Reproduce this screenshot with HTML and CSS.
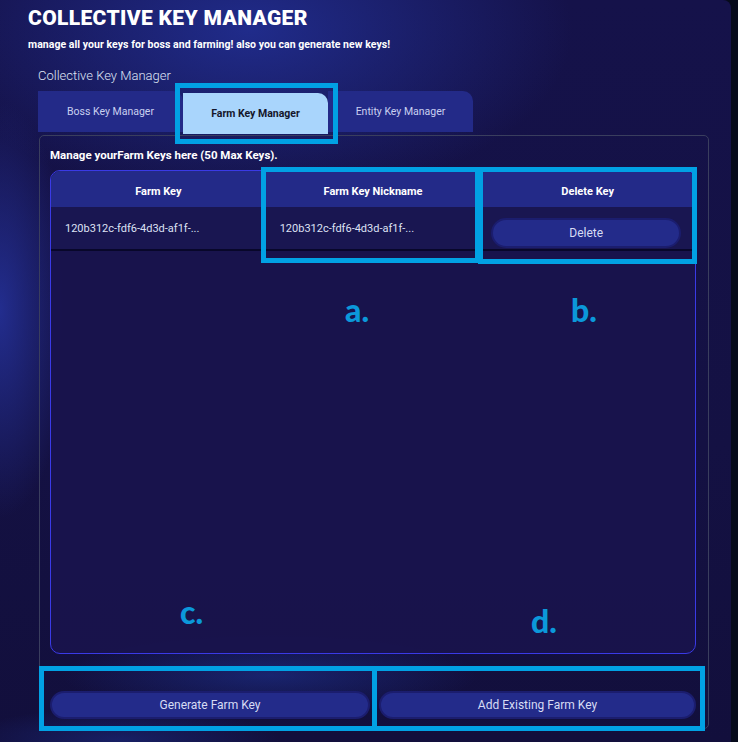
FILE: index.html
```html
<!DOCTYPE html>
<html>
<head>
<meta charset="utf-8">
<link rel="stylesheet" href="styles.css">
</head>
<body>
<div class="page">
  <h1 class="title">COLLECTIVE KEY MANAGER</h1>
  <p class="subtitle">manage all your keys for boss and farming! also you can generate new keys!</p>
  <div class="section-label">Collective Key Manager</div>
  <div class="tabs">
    <div class="tab">Boss Key Manager</div>
    <div class="tab active">Farm Key Manager</div>
    <div class="tab">Entity Key Manager</div>
  </div>
  <div class="panel">
    <div class="panel-head">Manage yourFarm Keys here (50 Max Keys).</div>
    <div class="table">
      <div class="row head">
        <div class="cell">Farm Key</div>
        <div class="cell">Farm Key Nickname</div>
        <div class="cell">Delete Key</div>
      </div>
      <div class="row data">
        <div class="cell">120b312c-fdf6-4d3d-af1f-...</div>
        <div class="cell">120b312c-fdf6-4d3d-af1f-...</div>
        <div class="cell btn-cell"><button class="pill small">Delete</button></div>
      </div>
    </div>
    <div class="actions">
      <button class="pill">Generate Farm Key</button>
      <button class="pill">Add Existing Farm Key</button>
    </div>
  </div>

  <div class="mark box-tab"></div>
  <div class="mark box-nick"></div>
  <div class="mark box-del"></div>
  <div class="mark box-gen"></div>
  <div class="mark box-add"></div>

  <span class="letter l-a">a.</span>
  <span class="letter l-b">b.</span>
  <span class="letter l-c">c.</span>
  <span class="letter l-d">d.</span>
</div>
</body>
</html>
```

FILE: styles.css
```css
html, body {
  margin: 0;
  padding: 0;
  background: #060a1b;
}
body {
  width: 738px;
  height: 742px;
  overflow: hidden;
  font-family: Roboto, "Noto Sans", sans-serif;
}
.page {
  position: relative;
  width: 731px;
  height: 742px;
  border-top-right-radius: 8px;
  overflow: hidden;
  display: flex;
  flex-direction: column;
  background:
    radial-gradient(ellipse 430px 230px at 250px 30px, rgba(34, 48, 150, 0.85) 0%, rgba(34, 48, 150, 0) 75%),
    radial-gradient(ellipse 90px 260px at 0px 310px, rgba(36, 48, 150, 0.9) 0%, rgba(36, 48, 150, 0) 80%),
    radial-gradient(ellipse 260px 50px at 270px 675px, rgba(30, 52, 150, 0.55) 0%, rgba(30, 52, 150, 0) 80%),
    radial-gradient(ellipse 200px 40px at 120px 740px, rgba(30, 52, 150, 0.45) 0%, rgba(30, 52, 150, 0) 80%),
    linear-gradient(180deg, #15124a 0%, #141143 60%, #120f3c 100%);
}
.title {
  margin: 0;
  padding: 3px 0 0 28px;
  font-size: 21px;
  line-height: 30px;
  font-weight: 900;
  color: #ffffff;
  letter-spacing: 0.35px;
}
.subtitle {
  margin: 5px 0 0 28px;
  font-size: 10.5px;
  line-height: 14px;
  font-weight: 700;
  color: #ffffff;
  letter-spacing: 0.05px;
}
.section-label {
  margin: 16px 0 0 38px;
  font-size: 13px;
  line-height: 16px;
  font-weight: 300;
  color: #dfe3f5;
}
.tabs {
  margin: 7px 0 0 38px;
  height: 44px;
  display: flex;
  align-items: flex-start;
}
.tab {
  width: 145px;
  height: 41px;
  display: flex;
  align-items: center;
  justify-content: center;
  background: #232a88;
  color: #c9d0f0;
  font-size: 10.5px;
  border-top-right-radius: 10px;
}
.tab.active {
  margin-top: 2px;
  background: #a9d5fc;
  color: #14162a;
  font-weight: 700;
}
.panel {
  margin-left: 39px;
  width: 670px;
  height: 594px;
  border: 1px solid #3a3e5e;
  border-radius: 5px;
  padding: 10px 12px 0 10px;
  box-sizing: border-box;
  display: flex;
  flex-direction: column;
}
.panel-head {
  height: 16px;
  line-height: 16px;
  font-size: 11.5px;
  font-weight: 700;
  color: #ffffff;
  margin-top: 1px;
}
.table {
  margin-top: 7px;
  height: 482px;
  border: 1px solid #3a3ae6;
  border-radius: 10px;
  overflow: hidden;
  background: rgba(24, 19, 76, 0.94);
}
.row {
  display: grid;
  grid-template-columns: 1fr 1fr 1fr;
}
.row.head {
  height: 36px;
  padding-top: 4px;
  box-sizing: border-box;
  background: #232a88;
}
.row.head .cell {
  justify-content: center;
  font-weight: 700;
  font-size: 11px;
  color: #ffffff;
}
.row.data {
  height: 44px;
  background: #191651;
  border-bottom: 2px solid #08072a;
  box-sizing: border-box;
}
.row.data .cell {
  padding-left: 14px;
  font-size: 11px;
  color: #dde1f4;
}
.cell {
  display: flex;
  align-items: center;
}
.row.data .btn-cell {
  align-items: flex-start;
  padding: 11px 14px 0 11px;
}
.pill {
  font-family: Roboto, "Noto Sans", sans-serif;
  background: #232b8a;
  border: 2px solid #1b1d6e;
  border-radius: 15px;
  color: #d7dcf4;
  font-size: 12px;
  height: 29px;
  padding: 0;
  cursor: pointer;
}
.pill.small {
  width: 100%;
  height: 30px;
}
.actions {
  margin-top: 37px;
  display: grid;
  grid-template-columns: 320px 317px;
  gap: 9px;
}
.actions .pill {
  height: 28px;
  border-radius: 14px;
}
.mark {
  position: absolute;
  border: 5px solid #01a1e4;
  box-sizing: border-box;
}
.box-tab { left: 175px; top: 83px; width: 163px; height: 61px; }
.box-nick { left: 261px; top: 167px; width: 219px; height: 96px; }
.box-del { left: 478px; top: 167px; width: 219px; height: 97px; }
.box-gen { left: 39px; top: 666px; width: 338px; height: 65px; }
.box-add { left: 372px; top: 666px; width: 333px; height: 65px; }
.letter {
  position: absolute;
  font-family: Lato, "Open Sans", sans-serif;
  font-weight: 900;
  font-size: 32px;
  line-height: 32px;
  color: #0b98da;
}
.l-a { left: 345px; top: 294px; }
.l-b { left: 571px; top: 294px; }
.l-c { left: 180px; top: 596px; }
.l-d { left: 531px; top: 605px; }
```
